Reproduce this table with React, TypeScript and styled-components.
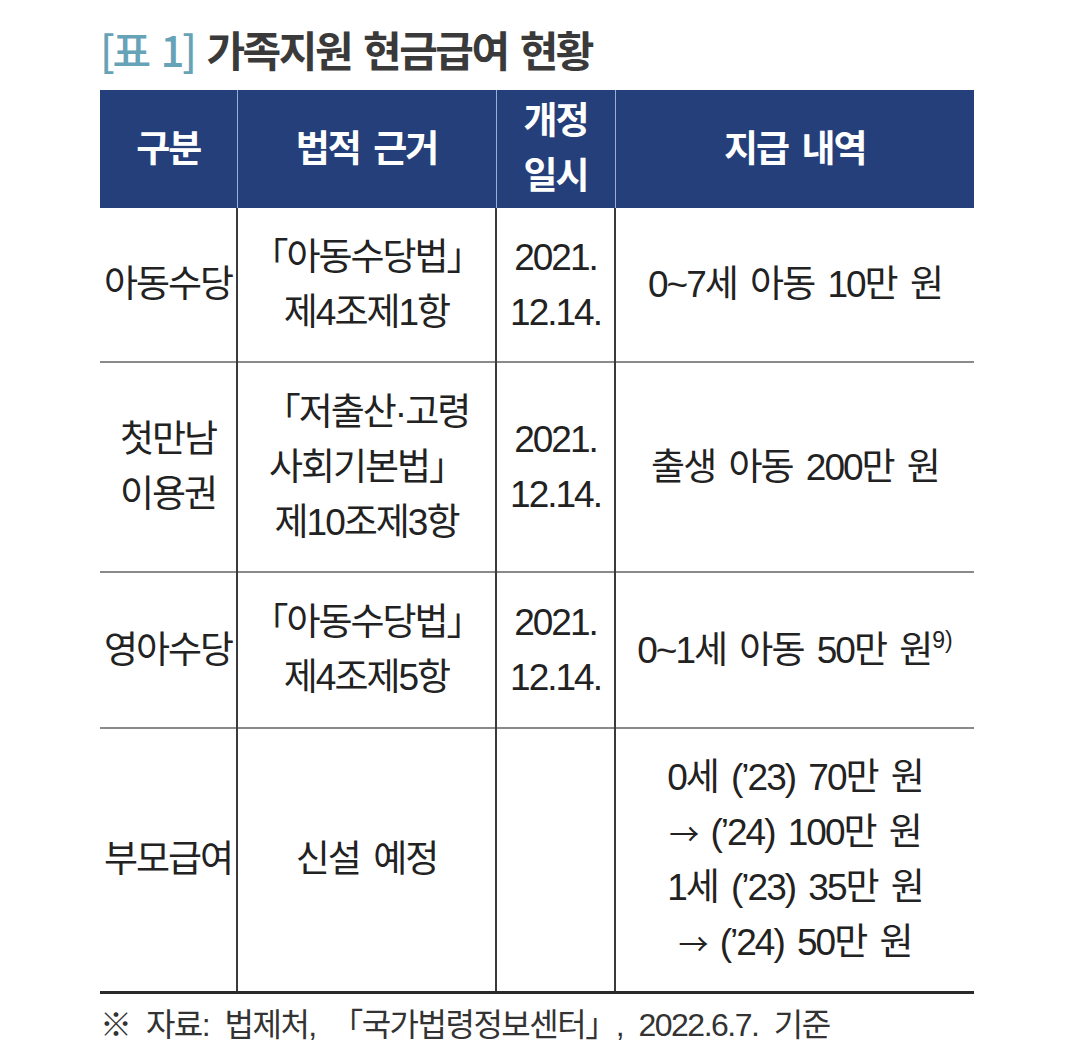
import { createGlobalStyle } from 'styled-components';
import styled from 'styled-components';

const GlobalStyle = createGlobalStyle`
  html, body {
    margin: 0;
    background: #ffffff;
  }
  body {
    font-family: "Liberation Sans", "Noto Sans CJK KR", sans-serif;
    color: #222222;
  }
`;

const Page = styled.div`
  width: 1080px;
  height: 1064px;
  padding: 26px 0 0 100px;
  box-sizing: border-box;
`;

const Title = styled.h2`
  margin: 0 0 18px;
  font-family: "Noto Sans CJK KR", sans-serif;
  font-size: 42px;
  line-height: 46px;
  font-weight: 700;
  letter-spacing: -2.5px;
  word-spacing: 5px;
  color: #3a3a3a;
`;

const TitleTag = styled.span`
  color: #67a3b7;
  font-weight: 500;
`;

const Table = styled.table`
  width: 874px;
  border-collapse: collapse;
  table-layout: fixed;
  font-size: 37px;
  letter-spacing: -2px;
  word-spacing: 5px;
  border-bottom: 3px solid #2a2a2a;
`;

const HeadCell = styled.th`
  height: 118px;
  padding: 0;
  background: #253f7b;
  color: #ffffff;
  font-weight: 700;
  line-height: 55px;
  text-align: center;
  border-left: 1px solid #9aaed6;
  &:first-child {
    border-left: none;
  }
`;

const Row = styled.tr<{ $h: number }>`
  height: ${p => p.$h}px;
  &:not(:first-child) > td {
    border-top: 2px solid #8a8a8a;
  }
`;

const Cell = styled.td`
  padding: 0;
  text-align: center;
  vertical-align: middle;
  line-height: 55px;
  border-left: 2px solid #3a3a3a;
  white-space: nowrap;
  &:first-child {
    border-left: none;
  }
`;

const Arrow = styled.span`
  font-family: "Noto Sans CJK KR", sans-serif;
  font-size: 30px;
`;

const Sup = styled.sup`
  font-size: 23px;
  line-height: 0;
  vertical-align: 15px;
  letter-spacing: 0;
  margin-left: 1px;
`;

const Source = styled.p`
  margin: 12px 0 0;
  font-size: 32px;
  line-height: 38px;
  letter-spacing: -1.5px;
  word-spacing: 8px;
  color: #333333;
`;

export default function App() {
  return (
    <>
      <GlobalStyle />
      <Page>
        <Title>
          <TitleTag>[표 1]</TitleTag> 가족지원 현금급여 현황
        </Title>
        <Table>
          <colgroup>
            <col style={{ width: 137 }} />
            <col style={{ width: 259 }} />
            <col style={{ width: 119 }} />
            <col style={{ width: 359 }} />
          </colgroup>
          <thead>
            <tr>
              <HeadCell>구분</HeadCell>
              <HeadCell>법적 근거</HeadCell>
              <HeadCell>
                개정
                <br />
                일시
              </HeadCell>
              <HeadCell>지급 내역</HeadCell>
            </tr>
          </thead>
          <tbody>
            <Row $h={154}>
              <Cell>아동수당</Cell>
              <Cell>
                「아동수당법」
                <br />
                제4조제1항
              </Cell>
              <Cell>
                2021.
                <br />
                12.14.
              </Cell>
              <Cell>0~7세 아동 10만 원</Cell>
            </Row>
            <Row $h={210}>
              <Cell>
                첫만남
                <br />
                이용권
              </Cell>
              <Cell>
                「저출산·고령
                <br />
                사회기본법」
                <br />
                제10조제3항
              </Cell>
              <Cell>
                2021.
                <br />
                12.14.
              </Cell>
              <Cell>출생 아동 200만 원</Cell>
            </Row>
            <Row $h={156}>
              <Cell>영아수당</Cell>
              <Cell>
                「아동수당법」
                <br />
                제4조제5항
              </Cell>
              <Cell>
                2021.
                <br />
                12.14.
              </Cell>
              <Cell>
                0~1세 아동 50만 원<Sup>9)</Sup>
              </Cell>
            </Row>
            <Row $h={264}>
              <Cell>부모급여</Cell>
              <Cell>신설 예정</Cell>
              <Cell />
              <Cell>
                0세 (’23) 70만 원
                <br />
                <Arrow>→</Arrow> (’24) 100만 원
                <br />
                1세 (’23) 35만 원
                <br />
                <Arrow>→</Arrow> (’24) 50만 원
              </Cell>
            </Row>
          </tbody>
        </Table>
        <Source>※ 자료: 법제처, 「국가법령정보센터」, 2022.6.7. 기준</Source>
      </Page>
    </>
  );
}
